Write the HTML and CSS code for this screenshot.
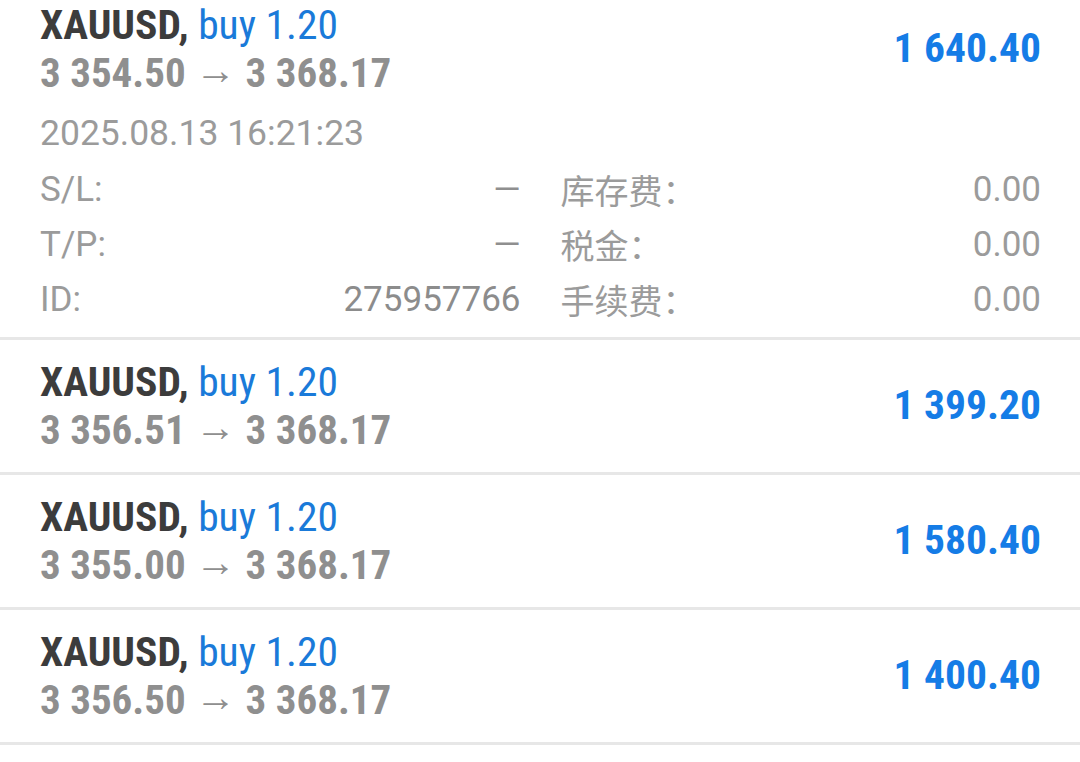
FILE: index.html
```html
<!DOCTYPE html>
<html>
<head>
  <title>Positions</title>
  <link rel="stylesheet" href="styles.css">
</head>
<body>
  <div id="positions">

    <div class="trade open">
      <div class="head">
        <div class="lines">
          <div class="title">XAUUSD, <span class="side">buy 1.20</span></div>
          <div class="prices">3 354.50 <span class="arrow">→</span> 3 368.17</div>
        </div>
        <div class="profit">1 640.40</div>
      </div>
      <div class="time">2025.08.13 16:21:23</div>
      <div class="details">
        <div class="field"><span>S/L:</span><span class="dash">—</span></div>
        <div class="field"><span class="cn">库存费：</span><span>0.00</span></div>
        <div class="field"><span>T/P:</span><span class="dash">—</span></div>
        <div class="field"><span class="cn">税金：</span><span>0.00</span></div>
        <div class="field"><span>ID:</span><span class="id">275957766</span></div>
        <div class="field"><span class="cn">手续费：</span><span>0.00</span></div>
      </div>
    </div>

    <div class="trade">
      <div class="head">
        <div class="lines">
          <div class="title">XAUUSD, <span class="side">buy 1.20</span></div>
          <div class="prices">3 356.51 <span class="arrow">→</span> 3 368.17</div>
        </div>
        <div class="profit">1 399.20</div>
      </div>
    </div>

    <div class="trade">
      <div class="head">
        <div class="lines">
          <div class="title">XAUUSD, <span class="side">buy 1.20</span></div>
          <div class="prices">3 355.00 <span class="arrow">→</span> 3 368.17</div>
        </div>
        <div class="profit">1 580.40</div>
      </div>
    </div>

    <div class="trade">
      <div class="head">
        <div class="lines">
          <div class="title">XAUUSD, <span class="side">buy 1.20</span></div>
          <div class="prices">3 356.50 <span class="arrow">→</span> 3 368.17</div>
        </div>
        <div class="profit">1 400.40</div>
      </div>
    </div>

  </div>
</body>
</html>
```
FILE: styles.css
```css
html,
body {
  margin: 0;
  background-color: #ffffff;
  font-family: Roboto, "Noto Sans CJK SC", sans-serif;
}

#positions {
  margin-top: -17px;
}

.trade {
  padding: 17px 39px 17px 40px;
  border-bottom: 3px solid #e7e7e7;
}

.trade.open {
  padding-bottom: 10px;
}

.head {
  display: flex;
  align-items: center;
  justify-content: space-between;
}

.title,
.prices {
  font-family: "Roboto Condensed", Roboto, sans-serif;
  height: 49px;
  line-height: 49px;
  font-weight: 700;
  white-space: nowrap;
}

.title {
  font-size: 41.5px;
  color: #3c3c3c;
}

.side {
  font-weight: 400;
  color: #1a7ad9;
}

.prices {
  font-size: 41px;
  color: #8f8f8f;
}

.arrow {
  font-family: Roboto, sans-serif;
  font-weight: 400;
  line-height: 0;
  vertical-align: 3px;
}

.profit {
  font-family: "Roboto Condensed", Roboto, sans-serif;
  font-size: 41.5px;
  font-weight: 700;
  color: #157ce6;
  margin-top: -3px;
}

.time {
  margin-top: 8px;
  font-size: 35.5px;
  line-height: 55px;
  color: #9b9b9b;
}

.details {
  margin-top: 1px;
  display: grid;
  grid-template-columns: 1fr 1fr;
  column-gap: 40px;
  font-size: 35px;
  line-height: 55px;
  color: #9b9b9b;
}

.field {
  display: flex;
  justify-content: space-between;
  height: 55px;
}

.cn {
  font-family: "Noto Sans CJK SC", sans-serif;
  font-size: 34px;
}

.dash {
  color: #8f8f8f;
}

.id {
  color: #8c8c8c;
}
```
